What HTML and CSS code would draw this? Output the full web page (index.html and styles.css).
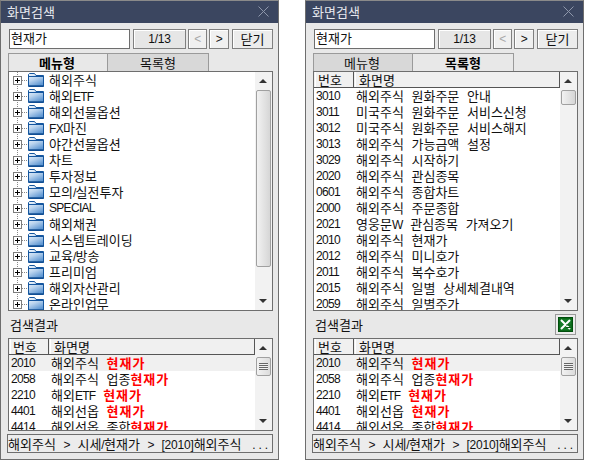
FILE: index.html
```html
<!DOCTYPE html>
<html lang="ko">
<head>
<meta charset="utf-8">
<title>화면검색</title>
<link rel="stylesheet" href="styles.css">
</head>
<body>
<svg class="defs" width="0" height="0" aria-hidden="true">
  <defs>
    <linearGradient id="fg" x1="0" y1="0" x2="0.5" y2="1">
      <stop offset="0" stop-color="#f4f9fe"/>
      <stop offset="0.5" stop-color="#b9d3ee"/>
      <stop offset="1" stop-color="#5f97d2"/>
    </linearGradient>
    <symbol id="folder" viewBox="0 0 16 14">
      <path d="M0.5 13.5V1.5L1.5 0.5H6.5L8 2.5H15.5V13.5Z" fill="url(#fg)" stroke="#14569f"/>
      <path d="M1 3.5H15" stroke="#14569f" stroke-width="1"/>
      <path d="M1 13H15.5" stroke="#0d4a8f" stroke-width="1.4"/>
    </symbol>
    <symbol id="plus" viewBox="0 0 9 9">
      <rect x="0.5" y="0.5" width="8" height="8" fill="#fff" stroke="#7d7d7d"/>
      <path d="M2 4.5H7M4.5 2V7" stroke="#000"/>
    </symbol>
  </defs>
</svg>
<main class="desk">

<section class="win">
  <header class="title"><span>화면검색</span><svg class="x" width="11" height="11" viewBox="0 0 11 11"><path d="M0.5 0.5L10.5 10.5M10.5 0.5L0.5 10.5" stroke="#8e97ab"/></svg></header>
  <div class="body">
    <div class="tools">
      <div class="input">현재가</div>
      <div class="btn count"><span class="l wide">1/13</span></div>
      <div class="btn arrow off"><span class="l">&lt;</span></div>
      <div class="btn arrow"><span class="l">&gt;</span></div>
      <div class="btn close">닫기</div>
    </div>
    <div class="tabs"><div class="tab on">메뉴형</div><div class="tab">목록형</div></div>
    <div class="panel main">
      <div class="rows">
        <div class="node"><svg class="plus"><use href="#plus"/></svg><i class="dash"></i><svg class="fold"><use href="#folder"/></svg><span>해외주식</span></div>
        <div class="node"><svg class="plus"><use href="#plus"/></svg><i class="dash"></i><svg class="fold"><use href="#folder"/></svg><span>해외<span class="l">ETF</span></span></div>
        <div class="node"><svg class="plus"><use href="#plus"/></svg><i class="dash"></i><svg class="fold"><use href="#folder"/></svg><span>해외선물옵션</span></div>
        <div class="node"><svg class="plus"><use href="#plus"/></svg><i class="dash"></i><svg class="fold"><use href="#folder"/></svg><span><span class="l">FX</span>마진</span></div>
        <div class="node"><svg class="plus"><use href="#plus"/></svg><i class="dash"></i><svg class="fold"><use href="#folder"/></svg><span>야간선물옵션</span></div>
        <div class="node"><svg class="plus"><use href="#plus"/></svg><i class="dash"></i><svg class="fold"><use href="#folder"/></svg><span>차트</span></div>
        <div class="node"><svg class="plus"><use href="#plus"/></svg><i class="dash"></i><svg class="fold"><use href="#folder"/></svg><span>투자정보</span></div>
        <div class="node"><svg class="plus"><use href="#plus"/></svg><i class="dash"></i><svg class="fold"><use href="#folder"/></svg><span>모의<span class="l">/</span>실전투자</span></div>
        <div class="node"><svg class="plus"><use href="#plus"/></svg><i class="dash"></i><svg class="fold"><use href="#folder"/></svg><span class="l">SPECIAL</span></div>
        <div class="node"><svg class="plus"><use href="#plus"/></svg><i class="dash"></i><svg class="fold"><use href="#folder"/></svg><span>해외채권</span></div>
        <div class="node"><svg class="plus"><use href="#plus"/></svg><i class="dash"></i><svg class="fold"><use href="#folder"/></svg><span>시스템트레이딩</span></div>
        <div class="node"><svg class="plus"><use href="#plus"/></svg><i class="dash"></i><svg class="fold"><use href="#folder"/></svg><span>교육<span class="l">/</span>방송</span></div>
        <div class="node"><svg class="plus"><use href="#plus"/></svg><i class="dash"></i><svg class="fold"><use href="#folder"/></svg><span>프리미엄</span></div>
        <div class="node"><svg class="plus"><use href="#plus"/></svg><i class="dash"></i><svg class="fold"><use href="#folder"/></svg><span>해외자산관리</span></div>
        <div class="node"><svg class="plus"><use href="#plus"/></svg><i class="dash"></i><svg class="fold"><use href="#folder"/></svg><span>온라인업무</span></div>
      </div>
      <div class="bar"><div class="up"></div><div class="thumb tall"></div><div class="fill"></div><div class="down"></div></div>
    </div>
    <div class="section"><span>검색결과</span></div>
    <div class="panel result">
      <div class="rows">
        <div class="head"><div class="hnum">번호</div><div class="hname">화면명</div></div>
        <div class="row sel"><span class="num">2010</span><span class="name">해외주식 <b>현재가</b></span></div>
        <div class="row"><span class="num">2058</span><span class="name">해외주식 업종<b>현재가</b></span></div>
        <div class="row"><span class="num">2210</span><span class="name">해외<span class="l">ETF</span> <b>현재가</b></span></div>
        <div class="row"><span class="num">4401</span><span class="name">해외선옵 <b>현재가</b></span></div>
        <div class="row"><span class="num">4414</span><span class="name">해외선옵 종합<b>현재가</b></span></div>
      </div>
      <div class="bar"><div class="up"></div><div class="thumb grip"></div><div class="fill"></div><div class="down"></div></div>
    </div>
    <div class="crumb">해외주식 <span class="l">&gt;</span> 시세<span class="l">/</span>현재가 <span class="l">&gt;</span> <span class="l wide">[2010]</span>해외주식 <span class="l dots">...</span></div>
  </div>
</section>

<section class="win">
  <header class="title"><span>화면검색</span><svg class="x" width="11" height="11" viewBox="0 0 11 11"><path d="M0.5 0.5L10.5 10.5M10.5 0.5L0.5 10.5" stroke="#8e97ab"/></svg></header>
  <div class="body">
    <div class="tools">
      <div class="input">현재가</div>
      <div class="btn count"><span class="l wide">1/13</span></div>
      <div class="btn arrow off"><span class="l">&lt;</span></div>
      <div class="btn arrow"><span class="l">&gt;</span></div>
      <div class="btn close">닫기</div>
    </div>
    <div class="tabs"><div class="tab">메뉴형</div><div class="tab on">목록형</div></div>
    <div class="panel main">
      <div class="rows">
        <div class="head"><div class="hnum">번호</div><div class="hname">화면명</div></div>
        <div class="row"><span class="num">3010</span><span class="name">해외주식 원화주문 안내</span></div>
        <div class="row"><span class="num">3011</span><span class="name">미국주식 원화주문 서비스신청</span></div>
        <div class="row"><span class="num">3012</span><span class="name">미국주식 원화주문 서비스해지</span></div>
        <div class="row"><span class="num">3013</span><span class="name">해외주식 가능금액 설정</span></div>
        <div class="row"><span class="num">3029</span><span class="name">해외주식 시작하기</span></div>
        <div class="row"><span class="num">2020</span><span class="name">해외주식 관심종목</span></div>
        <div class="row"><span class="num">0601</span><span class="name">해외주식 종합차트</span></div>
        <div class="row"><span class="num">2000</span><span class="name">해외주식 주문종합</span></div>
        <div class="row"><span class="num">2021</span><span class="name">영웅문<span class="l">W</span> 관심종목 가져오기</span></div>
        <div class="row"><span class="num">2010</span><span class="name">해외주식 현재가</span></div>
        <div class="row"><span class="num">2012</span><span class="name">해외주식 미니호가</span></div>
        <div class="row"><span class="num">2011</span><span class="name">해외주식 복수호가</span></div>
        <div class="row"><span class="num">2015</span><span class="name">해외주식 일별 상세체결내역</span></div>
        <div class="row"><span class="num">2059</span><span class="name">해외주식 일별주가</span></div>
      </div>
      <div class="bar"><div class="up"></div><div class="thumb short"></div><div class="fill"></div><div class="down"></div></div>
    </div>
    <div class="section"><span>검색결과</span>
      <div class="xls"><svg width="15" height="15" viewBox="0 0 15 15"><rect x="0.5" y="0.5" width="14" height="14" fill="#0a6a18" stroke="#004d0c"/><path d="M2 2H13V13H2Z" fill="#147a26"/><path d="M3 3L12 12M12 3L3 12" stroke="#fff" stroke-width="2"/><path d="M8 8H13M8 10.5H13" stroke="#0c5a16"/></svg></div>
    </div>
    <div class="panel result">
      <div class="rows">
        <div class="head"><div class="hnum">번호</div><div class="hname">화면명</div></div>
        <div class="row sel"><span class="num">2010</span><span class="name">해외주식 <b>현재가</b></span></div>
        <div class="row"><span class="num">2058</span><span class="name">해외주식 업종<b>현재가</b></span></div>
        <div class="row"><span class="num">2210</span><span class="name">해외<span class="l">ETF</span> <b>현재가</b></span></div>
        <div class="row"><span class="num">4401</span><span class="name">해외선옵 <b>현재가</b></span></div>
        <div class="row"><span class="num">4414</span><span class="name">해외선옵 종합<b>현재가</b></span></div>
      </div>
      <div class="bar"><div class="up"></div><div class="thumb grip"></div><div class="fill"></div><div class="down"></div></div>
    </div>
    <div class="crumb">해외주식 <span class="l">&gt;</span> 시세<span class="l">/</span>현재가 <span class="l">&gt;</span> <span class="l wide">[2010]</span>해외주식 <span class="l dots">...</span></div>
  </div>
</section>

</main>
</body>
</html>
```

FILE: styles.css
```css
* { box-sizing: border-box; }
html, body { margin: 0; padding: 0; background: #fff; }
body {
  width: 610px;
  height: 460px;
  overflow: hidden;
  font: 13px/16px "Noto Sans CJK KR", sans-serif;
  color: #111;
  word-spacing: 4px;
}
.defs { display: block; height: 0; }
.desk { display: flex; gap: 26px; height: 460px; }

.win {
  width: 279px;
  height: 460px;
  display: flex;
  flex-direction: column;
  background: #e8e8e8;
  border: 1px solid #6e6e6e;
  border-top-color: #8a8a8a;
}
.title {
  height: 22px;
  flex: none;
  display: flex;
  align-items: center;
  justify-content: space-between;
  padding: 0 9px 1px 6px;
  background: #3b4660;
  color: #e6e8ee;
  line-height: 20px;
}
.body {
  flex: 1;
  display: flex;
  flex-direction: column;
  padding: 6px 5px 0 7px;
  min-height: 0;
}
.l {
  font-family: "Liberation Sans", sans-serif;
  font-size: 12px;
  letter-spacing: -0.7px;
  word-spacing: 2px;
}
.wide { letter-spacing: -0.2px; }

.tools { display: flex; height: 20px; flex: none; margin-left: 1px; }
.input {
  width: 121px;
  background: #fff;
  border: 1px solid #6e6e6e;
  padding: 0 0 0 1px;
  line-height: 16px;
  margin-right: 3px;
}
.btn {
  display: flex;
  align-items: center;
  justify-content: center;
  background: #ececec;
  border: 1px solid #808080;
  box-shadow: inset 1px 1px 0 #fff;
}
.count { width: 53px; margin-right: 2px; background: #e6e6e6; }
.arrow { width: 19px; margin-right: 2px; background: #f0f0f0; }
.arrow + .arrow { width: 20px; margin-right: 3px; }
.arrow.off { color: #a8a8a8; }
.close { width: 41px; }

.tabs { display: flex; height: 18px; flex: none; margin: 4px 0 0 0; }
.tab {
  width: 100px;
  display: flex;
  align-items: center;
  justify-content: center;
  background: #d8d8d8;
  border: 1px solid #9a9a9a;
  border-bottom: 0;
  padding: 1px 2px 0 0;
}
.tab + .tab { border-left: 0; width: 101px; padding-right: 0; }
.tab.on { background: #e8e8e8; font-weight: 700; color: #000; }

.panel {
  display: flex;
  flex: none;
  width: 265px;
  background: #fff;
  border: 1px solid #6e6e6e;
  overflow: hidden;
}
.main { height: 240px; }
.result { height: 93px; }
.rows { flex: 1; min-width: 0; overflow: hidden; }

.node {
  height: 16px;
  display: flex;
  align-items: center;
  padding-left: 4px;
  background: linear-gradient(#888 50%, transparent 50%) 8px 0 / 1px 2px repeat-y;
  white-space: nowrap;
}
.plus { width: 9px; height: 9px; flex: none; }
.dash {
  width: 6px;
  height: 1px;
  flex: none;
  background: linear-gradient(90deg, #888 50%, transparent 50%) 0 0 / 2px 1px repeat-x;
}
.fold { width: 16px; height: 14px; flex: none; margin-right: 5px; }

.head {
  height: 16px;
  display: flex;
  background: #f0f0f0;
  border-bottom: 1px solid #555;
  padding-left: 1px;
}
.hnum {
  width: 39px;
  padding-left: 2px;
  border-right: 1px solid #555;
  border-left: 1px solid #fff;
  line-height: 15px;
}
.hname {
  flex: 1;
  padding-left: 3px;
  margin-left: 1px;
  border-left: 1px solid #fff;
  border-right: 1px solid #555;
  line-height: 15px;
}
.row {
  height: 16px;
  display: flex;
  white-space: nowrap;
  color: #111;
  line-height: 15px;
}
.row.sel { background: #f0f0f0; }
.num {
  width: 41px;
  flex: none;
  padding: 1px 0 0 2px;
  font-family: "Liberation Sans", sans-serif;
  font-size: 12px;
  letter-spacing: -0.7px;
}
.name { flex: 1; padding-left: 1px; }
b { color: #f00; font-weight: 700; letter-spacing: 1px; }

.bar {
  width: 17px;
  flex: none;
  display: flex;
  flex-direction: column;
  background: #f2f2f2;
}
.up, .down { height: 18px; flex: none; position: relative; }
.up::after, .down::after {
  content: "";
  position: absolute;
  left: 4px;
  width: 0;
  height: 0;
  border-left: 4px solid transparent;
  border-right: 4px solid transparent;
}
.up::after { top: 7px; border-bottom: 4px solid #333; }
.down::after { top: 7px; border-top: 4px solid #333; }
.thumb {
  flex: none;
  width: 15px;
  margin-left: 1px;
  border: 1px solid #a0a0a0;
  border-radius: 2px;
  background: linear-gradient(90deg, #f2f2f2, #d6d6d6);
}
.tall { height: 177px; }
.short { height: 15px; }
.grip {
  height: 19px;
  background:
    repeating-linear-gradient(#666 0 1px, #f0f0f0 1px 2px) center / 9px 7px no-repeat,
    linear-gradient(90deg, #f2f2f2, #dcdcdc);
}
.fill { flex: 1; }

.section {
  height: 27px;
  flex: none;
  display: flex;
  align-items: center;
  justify-content: space-between;
  padding: 0 2px 0 2px;
}
.xls {
  width: 21px;
  height: 21px;
  display: flex;
  align-items: center;
  justify-content: center;
  background: #ececec;
  border: 1px solid #9a9a9a;
}

.crumb {
  flex: none;
  height: 19px;
  margin: 3px 0 0 -1px;
  width: 266px;
  background: #ececec;
  border: 1px solid #6e6e6e;
  line-height: 17px;
  white-space: nowrap;
  overflow: hidden;
}
.dots { letter-spacing: 3px; padding-left: 3px; }
```
